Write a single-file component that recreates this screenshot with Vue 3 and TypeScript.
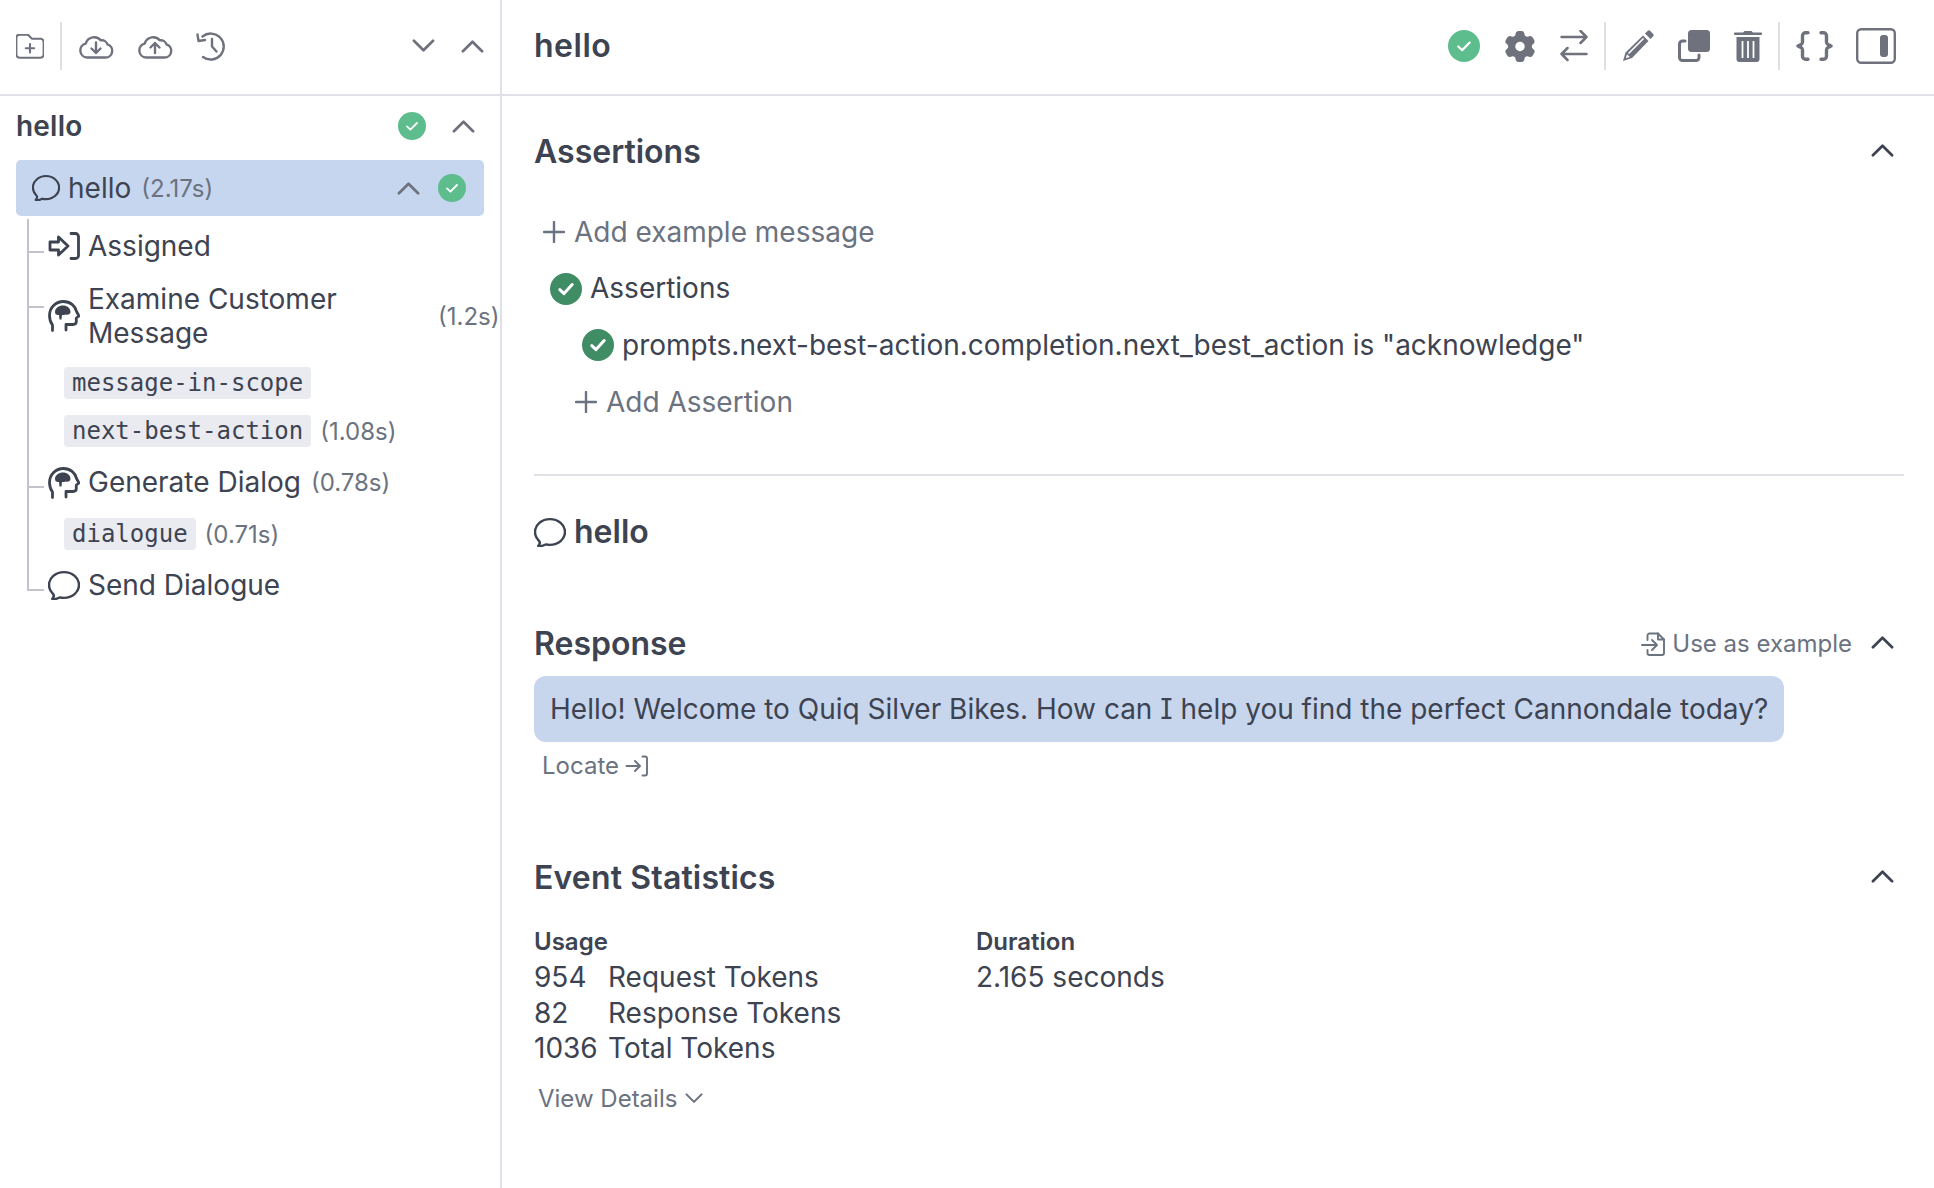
<script setup lang="ts">
interface UsageRow { value: number; label: string }
const usage: UsageRow[] = [
  { value: 954, label: 'Request Tokens' },
  { value: 82, label: 'Response Tokens' },
  { value: 1036, label: 'Total Tokens' },
]
</script>

<template>
  <svg class="sprite" aria-hidden="true">
    <defs>
      <symbol id="chev-up" viewBox="0 0 24 14"><path d="M2 12.5 12 2.5l10 10" fill="none" stroke="currentColor" stroke-width="2.800" stroke-linecap="round" stroke-linejoin="round" /></symbol>
      <symbol id="chev-down" viewBox="0 0 24 14"><path d="M2 1.500l10 10 10-10" fill="none" stroke="currentColor" stroke-width="2.800" stroke-linecap="round" stroke-linejoin="round" /></symbol>
      <symbol id="ok" viewBox="0 0 28 28"><circle cx="14" cy="14" r="14" fill="#5ebd8d" /><path d="M9 14.400l3.400 3.200L19 11" fill="none" stroke="#fff" stroke-width="1.900" stroke-linecap="round" stroke-linejoin="round" /></symbol>
      <symbol id="ok-dark" viewBox="0 0 32 32"><circle cx="16" cy="16" r="16" fill="#408c64" /><path d="M9.800 16.600l4.200 4L22.200 11.600" fill="none" stroke="#fff" stroke-width="3" stroke-linecap="round" stroke-linejoin="round" /></symbol>
      <symbol id="bubble" viewBox="2.400 3 19.200 18.600" preserveAspectRatio="none"><path d="M12 20.250c4.970 0 9-3.694 9-8.250s-4.030-8.250-9-8.250S3 7.444 3 12c0 2.104.859 4.023 2.273 5.480.432.447.74 1.040.586 1.641a4.483 4.483 0 0 1-.923 1.785A5.969 5.969 0 0 0 6 21c1.282 0 2.470-.402 3.445-1.087.81.22 1.668.337 2.555.337Z" fill="none" stroke="currentColor" stroke-width="1.500" stroke-linejoin="round" /></symbol>
      <symbol id="head" viewBox="0 0 32 32"><path d="M4.500 30.500V25C2.500 22.400 1.500 19 1.500 15.500 1.500 7.400 7.800 1.500 15.500 1.500c6.800 0 11.700 4.500 12.800 9.500l2.700 5-2.700 2v3.500c0 2-1.400 3-3.300 3H18v5.500" fill="none" stroke="currentColor" stroke-width="2.800" stroke-linecap="round" stroke-linejoin="round" /><path d="M7 12C7 8 11 5.500 15 5.500c4 0 7.500 2.500 7.500 6.500 0 2-2.500 3.500-5 2.500-1.500.7-2.500.7-3.500.5l-.5 4.500h-2L11 15c-2.500.5-4-1-4-3Z" fill="currentColor" /></symbol>
      <symbol id="enter" viewBox="0 0 32 28"><path d="M2 10h8.500V5L20 14l-9.500 9v-5H2Z" fill="none" stroke="currentColor" stroke-width="2.800" stroke-linejoin="round" /><path d="M23 1.500h4.500a3 3 0 0 1 3 3v19a3 3 0 0 1-3 3H23" fill="none" stroke="currentColor" stroke-width="2.800" stroke-linecap="round" /></symbol>
      <symbol id="plus" viewBox="0 0 22 22"><path d="M11 1v20M1 11h20" fill="none" stroke="currentColor" stroke-width="2.400" stroke-linecap="round" /></symbol>
    </defs>
  </svg>

  <div class="app">
    <aside class="side">
      <div class="side-bar">
        <svg class="ic folder" viewBox="2 3.500 20 17.500"><path d="M12 10.500v6m3-3H9m4.060-7.190-2.120-2.120a1.500 1.500 0 0 0-1.061-.44H4.500A2.250 2.250 0 0 0 2.250 6v12a2.250 2.250 0 0 0 2.250 2.250h15A2.250 2.250 0 0 0 21.750 18V9a2.250 2.250 0 0 0-2.250-2.250h-5.379a1.500 1.500 0 0 1-1.060-.44Z" fill="none" stroke="currentColor" stroke-width="1.500" stroke-linecap="round" stroke-linejoin="round" /></svg>
        <span class="sep first" />
        <svg class="ic cloud" viewBox="0 0 36 26"><path d="M9 24.500h18.500a6.700 6.700 0 0 0 2-13.100A5.800 5.800 0 0 0 23 7.400 8.800 8.800 0 0 0 7.800 10.500 7.100 7.100 0 0 0 9 24.500Z" fill="none" stroke="currentColor" stroke-width="2.400" stroke-linejoin="round" /><path d="M18 9.500v10.500m-4.500-4.500 4.500 4.500 4.500-4.500" fill="none" stroke="currentColor" stroke-width="2.400" stroke-linecap="round" stroke-linejoin="round" /></svg>
        <svg class="ic cloud up" viewBox="0 0 36 26"><path d="M9 24.500h18.500a6.700 6.700 0 0 0 2-13.100A5.800 5.800 0 0 0 23 7.400 8.800 8.800 0 0 0 7.800 10.500 7.100 7.100 0 0 0 9 24.500Z" fill="none" stroke="currentColor" stroke-width="2.400" stroke-linejoin="round" /><path d="M18 20V10m-4.500 4.500L18 10l4.500 4.500" fill="none" stroke="currentColor" stroke-width="2.400" stroke-linecap="round" stroke-linejoin="round" /></svg>
        <svg class="ic hist" viewBox="0 0 30 30"><path d="M6.500 5.500A13 13 0 1 1 7 26" fill="none" stroke="currentColor" stroke-width="2.400" stroke-linecap="round" /><path d="M1.500 3.500 2.500 10 9 9M16 8v7.500l4.500 5" fill="none" stroke="currentColor" stroke-width="2.400" stroke-linecap="round" stroke-linejoin="round" /></svg>
        <span class="grow" />
        <svg class="chev grey down-a"><use href="#chev-down" /></svg>
        <svg class="chev grey up-a"><use href="#chev-up" /></svg>
      </div>

      <div class="run-head">
        <span class="run-title">hello</span>
        <span class="grow" />
        <svg class="ok"><use href="#ok" /></svg>
        <svg class="chev grey run-chev"><use href="#chev-up" /></svg>
      </div>

      <div class="selected">
        <svg class="ic-28"><use href="#bubble" /></svg>
        <span class="sel-name">hello</span>
        <span class="time sel-time">(2.17s)</span>
        <span class="grow" />
        <svg class="chev grey sel-chev"><use href="#chev-up" /></svg>
        <svg class="ok"><use href="#ok" /></svg>
      </div>

      <div class="tree">
        <div class="node assigned">
          <svg class="node-ic"><use href="#enter" /></svg>
          <span class="node-name">Assigned</span>
        </div>
        <div class="node examine">
          <svg class="node-ic"><use href="#head" /></svg>
          <span class="node-name wrap">Examine Customer Message</span>
          <span class="time examine-time">(1.2s)</span>
        </div>
        <div class="sub"><code class="chip">message-in-scope</code></div>
        <div class="sub"><code class="chip">next-best-action</code><span class="time">(1.08s)</span></div>
        <div class="node gen">
          <svg class="node-ic"><use href="#head" /></svg>
          <span class="node-name">Generate Dialog</span>
          <span class="time">(0.78s)</span>
        </div>
        <div class="sub"><code class="chip">dialogue</code><span class="time">(0.71s)</span></div>
        <div class="node send">
          <svg class="node-ic wide"><use href="#bubble" /></svg>
          <span class="node-name">Send Dialogue</span>
        </div>
        <span class="tick t1" />
        <span class="tick t2" />
        <span class="tick t3" />
        <span class="tick t4" />
      </div>
    </aside>

    <main class="main">
      <header class="main-bar">
        <span class="heading top-title">hello</span>
        <span class="grow" />
        <svg class="ok big"><use href="#ok" /></svg>
        <svg class="tool gear" viewBox="2.600 2.250 18.800 19.500"><path fill-rule="evenodd" fill="currentColor" d="M11.078 2.250c-.917 0-1.699.663-1.850 1.567L9.050 4.889c-.02.12-.115.26-.297.348a7.493 7.493 0 0 0-.986.57c-.166.115-.334.126-.45.083L6.300 5.508a1.875 1.875 0 0 0-2.282.819l-.922 1.597a1.875 1.875 0 0 0 .432 2.385l.84.692c.095.078.17.229.154.43a7.598 7.598 0 0 0 0 1.139c.015.2-.059.352-.153.43l-.841.692a1.875 1.875 0 0 0-.432 2.385l.922 1.597a1.875 1.875 0 0 0 2.282.818l1.019-.382c.115-.043.283-.031.45.082.312.214.641.405.985.57.182.088.277.228.297.35l.178 1.071c.151.904.933 1.567 1.850 1.567h1.844c.916 0 1.699-.663 1.850-1.567l.178-1.072c.02-.12.114-.26.297-.349.344-.165.673-.356.985-.57.167-.114.335-.125.45-.082l1.020.382a1.875 1.875 0 0 0 2.280-.819l.923-1.597a1.875 1.875 0 0 0-.432-2.385l-.84-.692c-.095-.078-.17-.229-.154-.43a7.614 7.614 0 0 0 0-1.139c-.016-.2.059-.352.153-.43l.84-.692c.708-.582.891-1.590.433-2.385l-.922-1.597a1.875 1.875 0 0 0-2.282-.818l-1.020.382c-.114.043-.282.031-.449-.083a7.490 7.490 0 0 0-.985-.57c-.183-.087-.277-.227-.297-.348l-.179-1.072a1.875 1.875 0 0 0-1.850-1.567h-1.843ZM12 15a3 3 0 1 0 0-6 3 3 0 0 0 0 6Z" /></svg>
        <svg class="tool swap" viewBox="0 0 28 32"><path d="M1.500 7h25m-6-6 6 6-6 6M26.500 24h-25m6-6-6 6 6 6" fill="none" stroke="currentColor" stroke-width="2.500" stroke-linecap="round" stroke-linejoin="round" /></svg>
        <span class="sep sep-a" />
        <svg class="tool pencil" viewBox="0 0 32 32"><path d="M21 5.500l5.500 5.500L10 28 1 31l2.500-8.500Z" fill="currentColor" /><path d="M23 3.500l2.500-2.500a2 2 0 0 1 2.800 0L31 3.700a2 2 0 0 1 0 2.800L28.500 9Z" fill="currentColor" /><path d="M6.500 23.500l15-15" stroke="#fff" stroke-width="1.600" fill="none" /><path d="M3.800 28.200l1.200-4 2.800 2.800Z" fill="#fff" /></svg>
        <svg class="tool copy" viewBox="0 0 32 32"><rect x="10" y="0" width="22" height="22" rx="3.500" fill="currentColor" /><path d="M7 11H4.500a3 3 0 0 0-3 3v13.500a3 3 0 0 0 3 3H18a3 3 0 0 0 3-3V25" fill="none" stroke="currentColor" stroke-width="3" stroke-linecap="round" /></svg>
        <svg class="tool trash" viewBox="0 0 28 32"><path d="M9 2.500 10.500 1h7L19 2.500h8a1 1 0 0 1 0 2.500H1a1 1 0 0 1 0-2.500Z" fill="currentColor" /><path d="M2.500 7h23v22a3 3 0 0 1-3 3h-17a3 3 0 0 1-3-3Z" fill="currentColor" /><path d="M8.500 11v17M14 11v17M19.500 11v17" stroke="#fff" stroke-width="1.800" fill="none" /></svg>
        <span class="sep sep-b" />
        <svg class="tool braces" viewBox="0 0 37 30"><path d="M12 1.800H9.500a3 3 0 0 0-3 3V11a3 3 0 0 1-1.500 2.600L2 15l3 1.400A3 3 0 0 1 6.500 19v6.200a3 3 0 0 0 3 3H12M25 1.800h2.500a3 3 0 0 1 3 3V11a3 3 0 0 0 1.500 2.600l3 1.400-3 1.400a3 3 0 0 0-1.500 2.600v6.200a3 3 0 0 1-3 3H25" fill="none" stroke="currentColor" stroke-width="3.400" stroke-linecap="round" stroke-linejoin="round" /></svg>
        <svg class="tool panel" viewBox="0 0 40 36"><rect x="1.200" y="1.200" width="37.600" height="33.600" rx="4" fill="none" stroke="currentColor" stroke-width="2.400" /><rect x="24" y="7" width="8" height="22" rx="3" fill="currentColor" /></svg>
      </header>

      <div class="content">
        <section class="head-row first-head">
          <span class="heading">Assertions</span>
          <svg class="chev dark"><use href="#chev-up" /></svg>
        </section>

        <div class="line add-ex"><svg class="plus"><use href="#plus" /></svg><span class="muted">Add example message</span></div>
        <div class="line as-1"><svg class="ok-d"><use href="#ok-dark" /></svg><span>Assertions</span></div>
        <div class="line as-2"><svg class="ok-d"><use href="#ok-dark" /></svg><span>prompts.next-best-action.completion.next_best_action is "acknowledge"</span></div>
        <div class="line add-as"><svg class="plus"><use href="#plus" /></svg><span class="muted">Add Assertion</span></div>

        <hr class="rule" />

        <div class="event-title"><svg class="ev-ic"><use href="#bubble" /></svg><span class="heading">hello</span></div>

        <div class="head-row resp-head">
          <span class="heading">Response</span>
          <span class="grow" />
          <svg class="doc" viewBox="0 0 25 24"><path d="M6.500 8V3.500a2 2 0 0 1 2-2h8.500l6 6V21a2 2 0 0 1-2 2H8.500a2 2 0 0 1-2-2v-3" fill="none" stroke="currentColor" stroke-width="1.900" stroke-linecap="round" stroke-linejoin="round" /><path d="M17 1.500V7.500h6M1 13h15m-5-5 5 5-5 5" fill="none" stroke="currentColor" stroke-width="1.900" stroke-linecap="round" stroke-linejoin="round" /></svg>
          <span class="small muted use-ex">Use as example</span>
          <svg class="chev dark"><use href="#chev-up" /></svg>
        </div>

        <div class="bubble">Hello! Welcome to Quiq Silver Bikes. How can I help you find the perfect Cannondale today?</div>
        <div class="locate">
          <span class="small muted">Locate</span>
          <svg class="loc-ic" viewBox="0 0 24 22"><path d="M1.500 11H15m-5-5 5 5-5 5M17.500 1.500H20a2 2 0 0 1 2 2v15a2 2 0 0 1-2 2h-2.500" fill="none" stroke="currentColor" stroke-width="1.900" stroke-linecap="round" stroke-linejoin="round" /></svg>
        </div>

        <div class="head-row stat-head">
          <span class="heading stat-title">Event Statistics</span>
          <svg class="chev dark"><use href="#chev-up" /></svg>
        </div>

        <div class="stats">
          <div class="stat-col usage">
            <div class="stat-label">Usage</div>
            <div class="usage-grid">
              <template v-for="row in usage" :key="row.label">
                <span>{{ row.value }}</span>
                <span>{{ row.label }}</span>
              </template>
            </div>
          </div>
          <div class="stat-col">
            <div class="stat-label">Duration</div>
            <div class="dur">2.165 seconds</div>
          </div>
        </div>

        <div class="details">
          <span class="small muted">View Details</span>
          <svg class="mini-chev"><use href="#chev-down" /></svg>
        </div>
      </div>
    </main>
  </div>
</template>

<style>
html, body { margin: 0; background: #fff; }
</style>

<style scoped>
.sprite { position: absolute; width: 0; height: 0; }
.app {
  display: flex;
  height: 100vh;
  font-family: Inter, "Liberation Sans", sans-serif;
  font-feature-settings: "cv08";
  font-size: 28px;
  line-height: 35px;
  color: #3d4351;
  overflow: hidden;
}
.grow { flex: 1; }
svg { flex: none; display: block; }

.side { width: 500px; flex: none; border-right: 2px solid #e0e0e8; }
.side-bar {
  display: flex; align-items: center;
  height: 92px; padding: 0 0 2px 16px; border-bottom: 2px solid #e0e0e8;
  color: #6f727d;
}
.sep { width: 2px; height: 48px; background: #dedee5; flex: none; }
.ic.folder { width: 28px; height: 25px; }
.sep.first { margin-left: 16px; }
.ic.cloud { width: 36px; height: 26px; margin-left: 16px; }
.ic.cloud.up { margin-left: 23px; }
.ic.hist { width: 30px; height: 30px; margin-left: 23px; }
.chev { width: 23px; height: 14px; }
.grey { color: #6f727d; }
.dark { color: #3d4351; margin: 0 10px 4px 0; }
.down-a { margin-right: 26px; }
.up-a { margin-right: 16px; }

.run-head { display: flex; align-items: center; height: 60px; padding: 0 25px 0 16px; }
.run-title { font-weight: 600; letter-spacing: .2px; }
.ok { width: 28px; height: 28px; }
.run-chev { margin-left: 26px; }

.selected {
  display: flex; align-items: center;
  height: 56px; margin: 4px 16px 0; padding: 0 18px 0 16px;
  background: #c5d6ee; border-radius: 5px;
}
.ic-28 { width: 28px; height: 26px; }
.sel-name { margin-left: 8px; }
.sel-time { margin-left: 9px; }
.sel-chev { margin-right: 18px; }
.time { font-size: 24px; color: #6b7280; margin-left: 10px; white-space: nowrap; }

.tree { position: relative; margin: 3px 0 0 27px; border-left: 2px solid #c3c3cb; height: 372px; padding-left: 19px; }
.tick { position: absolute; left: 0; width: 15px; height: 2px; background: #c3c3cb; }
.t1 { top: 32px; }
.t2 { top: 87px; }
.t3 { top: 267px; }
.t4 { top: 370px; }
.node { display: flex; align-items: center; }
.node-ic { width: 32px; height: 32px; }
.node-ic.wide { height: 29px; }
.node-name { margin-left: 8px; }
.assigned { height: 54px; }
.examine { height: 70px; margin: 8px 0; }
.wrap { width: 280px; flex: none; line-height: 34px; }
.examine-time { margin-left: 0; padding-left: 70px; }
.sub { display: flex; align-items: center; height: 48px; margin-left: 16px; }
.sub .time { margin-left: 9px; }
.chip {
  font-family: "DejaVu Sans Mono", monospace; font-size: 24px; line-height: 32px;
  padding: 0 8px; background: #eaebf0; border-radius: 4px; color: #3d4351;
}
.gen { height: 55px; }
.send { height: 54px; }

.main { flex: 1; min-width: 0; }
.main-bar {
  display: flex; align-items: center;
  height: 92px; padding: 0 38px 2px 32px; border-bottom: 2px solid #e0e0e8;
  color: #6f727d;
}
.heading { font-size: 32px; line-height: 40px; font-weight: 600; color: #3d4351; }
.top-title { letter-spacing: .5px; }
.stat-title { letter-spacing: .15px; }
.ok.big { width: 32px; height: 32px; }
.tool { height: 32px; }
.gear { width: 30px; margin-left: 25px; height: 31px; }
.swap { width: 28px; margin-left: 25px; }
.sep-a { margin-left: 16.500px; }
.pencil { width: 32px; margin-left: 15.500px; }
.copy { width: 32px; margin-left: 24px; }
.trash { width: 28px; margin-left: 24px; }
.sep-b { margin-left: 16.500px; }
.braces { width: 37px; height: 30px; margin-left: 16px; }
.panel { width: 40px; height: 36px; margin-left: 23px; }

.content { padding: 0 30px 0 32px; }
.head-row { display: flex; align-items: center; justify-content: space-between; }
.first-head { margin-top: 36px; }
.line { display: flex; align-items: center; height: 56.500px; }
.add-ex { margin-top: 32px; padding-left: 9px; }
.as-1 { padding-left: 16px; }
.as-2 { padding-left: 48px; }
.add-as { padding-left: 41px; padding-top: 1px; height: 55.500px; }
.plus { width: 22px; height: 22px; color: #6b7280; margin-right: 9px; }
.ok-d { width: 32px; height: 32px; margin-right: 8px; }
.muted { color: #6b7280; }
.rule { margin: 44px 0 0; border: 0; height: 2px; background: #e0e0e8; }
.event-title { display: flex; align-items: center; margin-top: 36px; }
.ev-ic { width: 32px; height: 29px; margin-right: 8px; }
.resp-head { margin-top: 72px; }
.doc { width: 25px; height: 24px; color: #6b7280; }
.small { font-size: 24px; line-height: 30px; }
.use-ex { margin: 0 19px 0 6px; }
.bubble {
  display: flex; align-items: center;
  width: fit-content; height: 66px; margin-top: 12px; padding: 0 16px;
  background: #c7d6ed; border-radius: 12px;
}
.locate { display: flex; align-items: center; height: 28px; margin: 10px 0 0 8px; }
.loc-ic { width: 24px; height: 22px; margin-left: 6px; color: #6b7280; }
.stat-head { margin-top: 78px; }
.stats { display: flex; margin-top: 29px; }
.stat-col.usage { width: 442px; }
.stat-label { font-size: 24px; line-height: 30px; font-weight: 600; }
.usage-grid { display: grid; grid-template-columns: 74px auto; grid-auto-rows: 35.600px; margin-top: 3px; width: fit-content; }
.dur { margin-top: 3px; }
.details { display: flex; align-items: center; height: 30px; margin: 17px 0 0 4px; }
.mini-chev { width: 18px; height: 11px; margin-left: 8px; color: #6b7280; }
</style>
